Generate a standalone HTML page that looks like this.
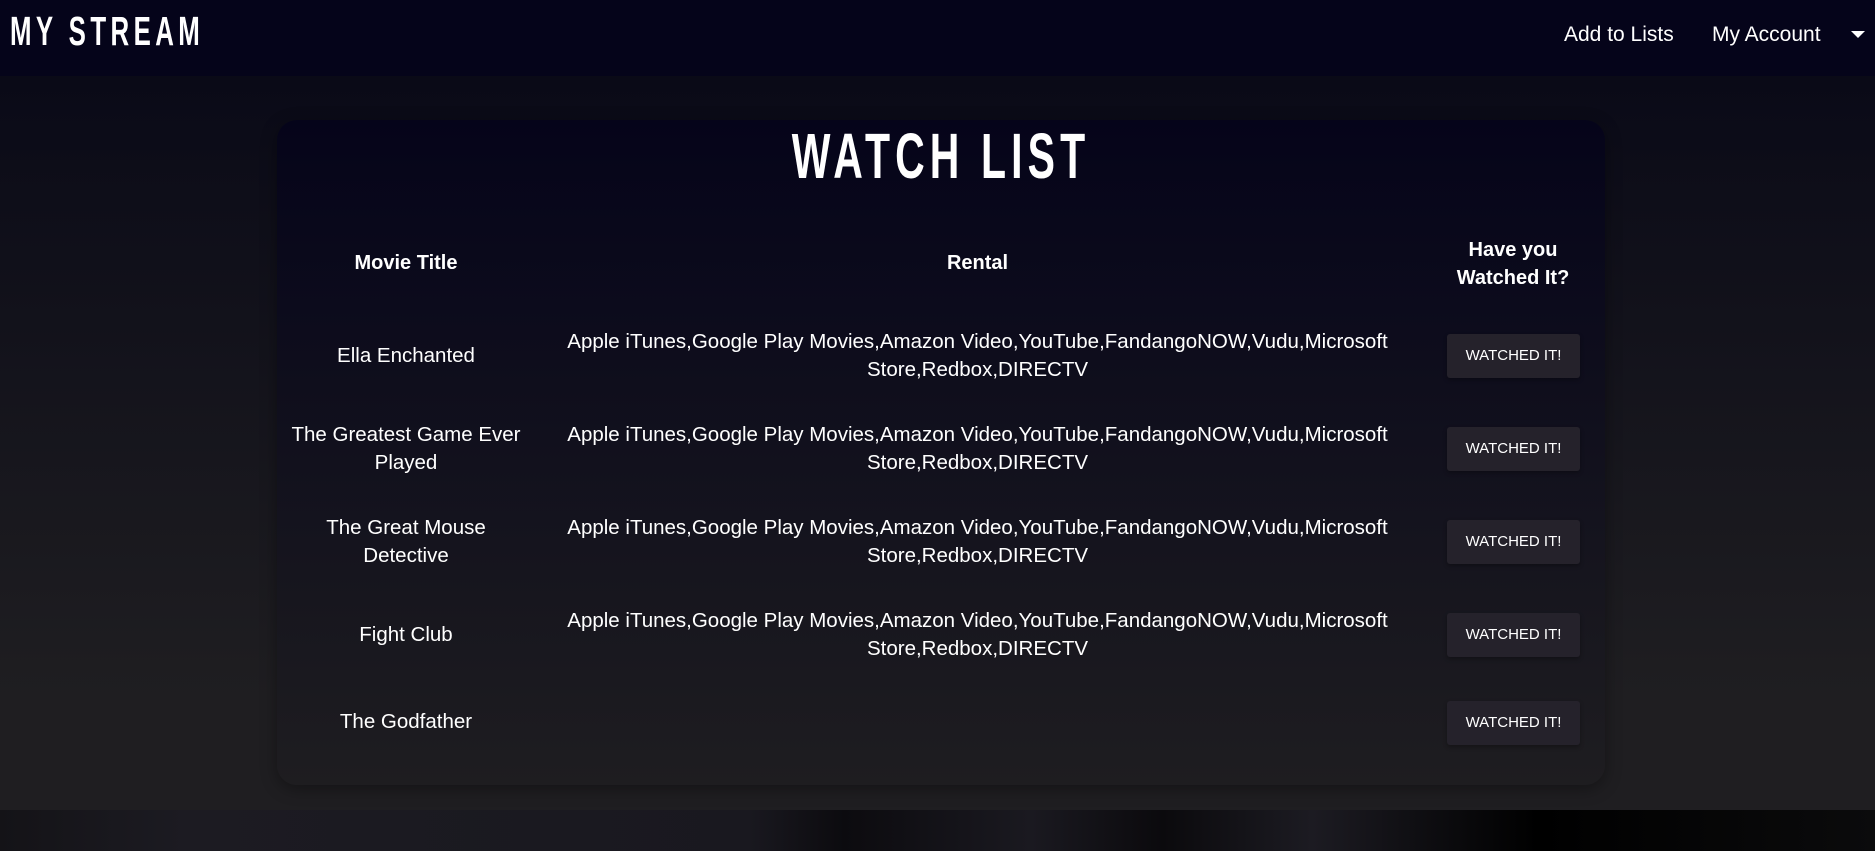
<!DOCTYPE html>
<html><head><meta charset="utf-8"><style>
*{margin:0;padding:0;box-sizing:border-box}
body{width:1875px;height:851px;overflow:hidden;background:#1f1e21;font-family:"Liberation Sans",sans-serif;color:#fff;position:relative}
.nav{position:absolute;left:0;top:0;width:1875px;height:76px;background:#05041a}
.bg{position:absolute;left:0;top:76px;width:1875px;height:734px;background:linear-gradient(#0a0a17,#1f1e21 85%)}
.foot{position:absolute;left:0;top:810px;width:1875px;height:41px;background:linear-gradient(90deg,#141317 0%,#1c1b22 10%,#19181f 40%,#0c0b0f 45%,#1a1920 55%,#0b0a0d 62%,#1c1b22 70%,#000 82%,#0b0b0c 100%)}
.logo{position:absolute;left:10px;top:8px;font-family:"Liberation Sans Narrow","Liberation Sans",sans-serif;font-weight:bold;font-size:41px;letter-spacing:7px;transform:scaleX(.63);transform-origin:left}
.nl{position:absolute;top:23px;font-size:21px}
.caret{position:absolute;left:1851px;top:31px;width:0;height:0;border-left:7px solid transparent;border-right:7px solid transparent;border-top:7px solid #fff}
.card{position:absolute;left:277px;top:120px;width:1328px;height:665px;border-radius:20px;background:linear-gradient(#05041a,#1e1d20);box-shadow:0 4px 16px rgba(0,0,0,.35)}
h1{position:absolute;left:0;width:1328px;top:-1px;text-align:center;font-family:"Liberation Sans Narrow","Liberation Sans",sans-serif;font-weight:bold;font-size:64px;letter-spacing:8px;transform:scaleX(.64)}
.c{position:absolute;text-align:center;font-size:20.5px;line-height:28px}
.h{font-weight:bold;font-size:20px}
.btn{position:absolute;left:1170px;width:133px;height:44px;background:#25222b;border-radius:3px;font-size:15px;line-height:44px;text-align:center;box-shadow:0 2px 4px rgba(0,0,0,.3)}
</style></head><body>
<div class="nav"></div><div class="bg"></div><div class="foot"></div>
<div class="logo">MY STREAM</div>
<div class="nl" style="left:1564px">Add to Lists</div>
<div class="nl" style="left:1712px">My Account</div>
<div class="caret"></div>
<div class="card">
<h1>WATCH LIST</h1>
<div class="c h" style="left:0;width:258px;top:129px">Movie Title</div>
<div class="c h" style="left:263px;width:875px;top:129px">Rental</div>
<div class="c h" style="left:1143px;width:186px;top:116px">Have you<br>Watched It?</div>

<div class="c" style="left:0;width:258px;top:222px">Ella Enchanted</div>
<div class="c" style="left:263px;width:875px;top:208px">Apple iTunes,Google Play Movies,Amazon Video,YouTube,FandangoNOW,Vudu,Microsoft<br>Store,Redbox,DIRECTV</div>
<div class="btn" style="top:214px">WATCHED IT!</div>

<div class="c" style="left:0;width:258px;top:301px">The Greatest Game Ever<br>Played</div>
<div class="c" style="left:263px;width:875px;top:301px">Apple iTunes,Google Play Movies,Amazon Video,YouTube,FandangoNOW,Vudu,Microsoft<br>Store,Redbox,DIRECTV</div>
<div class="btn" style="top:307px">WATCHED IT!</div>

<div class="c" style="left:0;width:258px;top:394px">The Great Mouse<br>Detective</div>
<div class="c" style="left:263px;width:875px;top:394px">Apple iTunes,Google Play Movies,Amazon Video,YouTube,FandangoNOW,Vudu,Microsoft<br>Store,Redbox,DIRECTV</div>
<div class="btn" style="top:400px">WATCHED IT!</div>

<div class="c" style="left:0;width:258px;top:501px">Fight Club</div>
<div class="c" style="left:263px;width:875px;top:487px">Apple iTunes,Google Play Movies,Amazon Video,YouTube,FandangoNOW,Vudu,Microsoft<br>Store,Redbox,DIRECTV</div>
<div class="btn" style="top:493px">WATCHED IT!</div>

<div class="c" style="left:0;width:258px;top:588px">The Godfather</div>
<div class="btn" style="top:581px">WATCHED IT!</div>
</div>
</body></html>
